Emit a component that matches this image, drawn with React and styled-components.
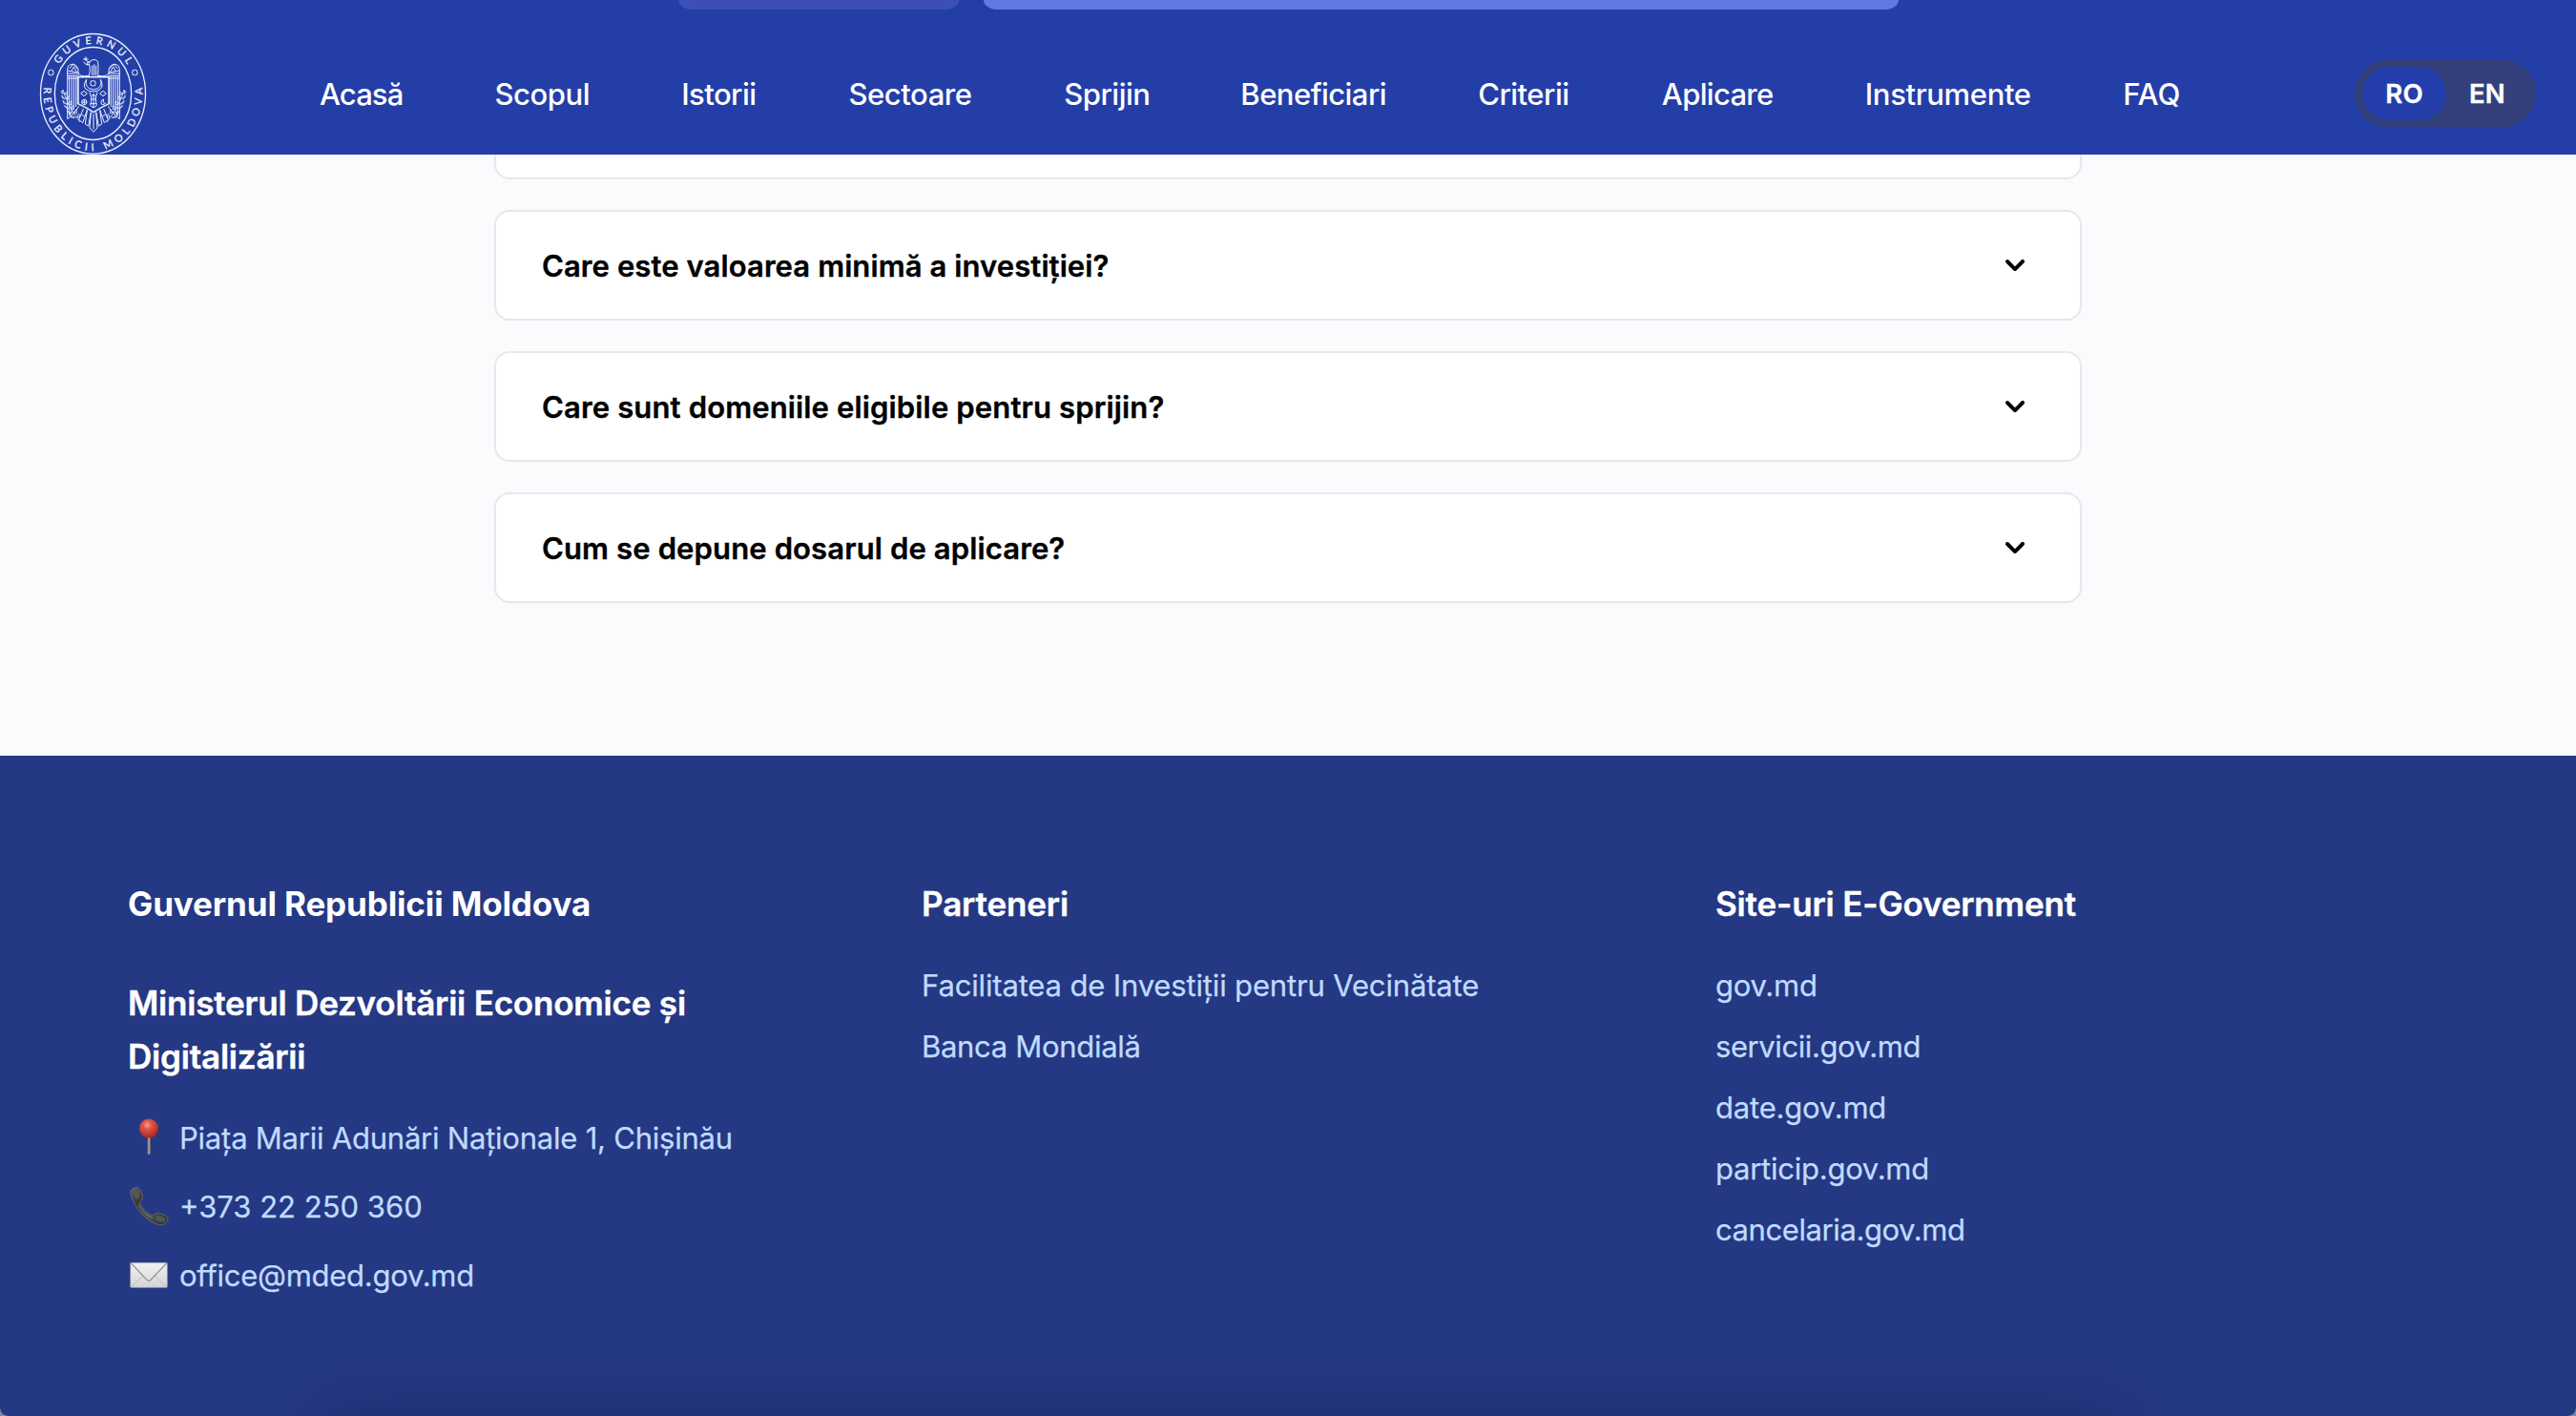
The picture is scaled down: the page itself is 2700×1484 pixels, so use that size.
import React from 'react';
import styled, { createGlobalStyle } from 'styled-components';

const GlobalStyle = createGlobalStyle`
  *, *::before, *::after { box-sizing: border-box; }
  html, body { margin: 0; padding: 0; background: #7f88a3; }
  body {
    font-family: Inter, Roboto, "Liberation Sans", sans-serif;
    -webkit-font-smoothing: antialiased;
  }
`;

const Page = styled.div`
  display: flex;
  flex-direction: column;
  width: 2700px;
  height: 1484px;
  overflow: hidden;
  background: #fafbfd;
  border-radius: 0 0 8px 8px;
`;

const Header = styled.header`
  flex: none;
  display: flex;
  flex-direction: column;
  height: 162px;
  background: #243ea8;
`;

const HeroEdge = styled.div`
  display: flex;
  gap: 26px;
  height: 10px;
  padding-left: 711px;
`;

const HeroButton = styled.div`
  width: ${(p) => p.$width}px;
  height: 10px;
  border-radius: 0 0 14px 14px / 0 0 10px 10px;
  background: ${(p) => (p.$primary ? '#607ae3' : '#3b50b7')};
`;

const Bar = styled.div`
  display: flex;
  align-items: center;
  height: 128px;
  margin-top: 24px;
  padding: 0 42px 0 38px;
`;

const LogoLink = styled.a`
  flex: none;
  display: flex;
  align-items: flex-end;
  width: 120px;
  height: 128px;
`;

const Nav = styled.nav`
  display: flex;
  gap: 96px;
  margin-left: 177px;
`;

const NavLink = styled.a`
  flex: none;
  width: ${(p) => p.$width}px;
  padding-top: 1px;
  color: #fff;
  font-size: 31px;
  font-weight: 500;
  line-height: 48px;
  letter-spacing: ${(p) => p.$track}px;
  white-space: nowrap;
`;

const LangSwitch = styled.div`
  display: flex;
  align-items: center;
  width: 190px;
  height: 72px;
  margin-left: auto;
  padding: 8px;
  border-radius: 36px;
  background: #33407b;
`;

const LangButton = styled.button`
  width: ${(p) => (p.$active ? 88 : 86)}px;
  height: 56px;
  padding: 0;
  border: 0;
  border-radius: 28px;
  background: ${(p) => (p.$active ? '#243eab' : 'transparent')};
  color: #fff;
  font-family: inherit;
  font-size: 27.5px;
  font-weight: 600;
  line-height: 56px;
  letter-spacing: 0.3px;
  -webkit-text-stroke: 0.4px #fff;
`;

const Faq = styled.main`
  flex: none;
  display: flex;
  flex-direction: column;
  gap: 32px;
  width: 1664px;
  height: 630px;
  margin: 0 auto;
`;

const ClosedTail = styled.div`
  height: 26px;
  border: 2px solid #e6e8eb;
  border-top: 0;
  border-radius: 0 0 16px 16px;
  background: #fff;
`;

const Question = styled.button`
  display: flex;
  align-items: center;
  justify-content: space-between;
  height: 116px;
  padding: 0 48px;
  border: 2px solid #e6e8eb;
  border-radius: 16px;
  background: #fff;
  color: #000;
  font-family: inherit;
  text-align: left;
`;

const QuestionText = styled.span`
  padding-top: 1px;
  font-size: 31px;
  font-weight: 600;
  line-height: 56px;
  letter-spacing: ${(p) => p.$track}px;
  -webkit-text-stroke: 0.35px #000;
`;

const Footer = styled.footer`
  position: relative;
  flex: 1;
  display: grid;
  grid-template-columns: repeat(3, 768px);
  column-gap: 64px;
  align-items: start;
  padding: 127px 134px 0;
  background: #253883;
`;

const DockShade = styled.div`
  position: absolute;
  left: 340px;
  right: 480px;
  bottom: -80px;
  height: 80px;
  box-shadow: 0 0 64px rgba(10, 16, 60, 0.32);
`;

const Column = styled.section`
  display: flex;
  flex-direction: column;
`;

const Heading = styled.h3`
  margin: 0 0 ${(p) => p.$after}px;
  color: #fff;
  font-size: 35px;
  font-weight: ${(p) => p.$weight};
  line-height: 56px;
  letter-spacing: ${(p) => p.$track}px;
  -webkit-text-stroke: ${(p) => (p.$weight < 700 ? 0.4 : 0)}px #fff;
`;

const Links = styled.ul`
  display: flex;
  flex-direction: column;
  gap: ${(p) => p.$gap}px;
  margin: 0;
  padding: 0;
  list-style: none;
`;

const LinkItem = styled.li`
  display: flex;
  align-items: flex-start;
  height: 48px;
  color: #bfdbfe;
  font-size: 31px;
  font-weight: 400;
  line-height: 49px;
  letter-spacing: ${(p) => p.$track}px;
  -webkit-text-stroke: 0.25px #bfdbfe;
  white-space: nowrap;
`;

const Glyph = styled.svg`
  flex: none;
  width: 54px;
  height: 48px;
`;

function Chevron() {
  return (
    <svg width="40" height="40" viewBox="0 0 20 20" fill="#000">
      <path
        fillRule="evenodd"
        clipRule="evenodd"
        d="M5.293 7.293a1 1 0 011.414 0L10 10.586l3.293-3.293a1 1 0 111.414 1.414l-4 4a1 1 0 01-1.414 0l-4-4a1 1 0 010-1.414z"
      />
    </svg>
  );
}

function Pin() {
  return (
    <Glyph viewBox="0 0 54 48">
      <defs>
        <radialGradient id="pinBall" cx="0.42" cy="0.32" r="0.7">
          <stop offset="0" stopColor="#f59a8c" />
          <stop offset="0.35" stopColor="#df5247" />
          <stop offset="1" stopColor="#a5241f" />
        </radialGradient>
        <linearGradient id="pinStem" x1="0" x2="1" y1="0" y2="0">
          <stop offset="0" stopColor="#5f6270" />
          <stop offset="0.5" stopColor="#a9a9ad" />
          <stop offset="1" stopColor="#6a6460" />
        </linearGradient>
      </defs>
      <path d="M20.4 23h3.4v17.5q-1.7 3-3.4 0z" fill="url(#pinStem)" />
      <circle cx="22" cy="14.6" r="10" fill="url(#pinBall)" />
    </Glyph>
  );
}

function Phone() {
  return (
    <Glyph viewBox="0 0 54 48">
      <defs>
        <linearGradient id="phoneBody" x1="0" x2="1" y1="0" y2="1">
          <stop offset="0" stopColor="#5a6260" />
          <stop offset="0.3" stopColor="#353a3b" />
          <stop offset="0.6" stopColor="#4b504f" />
          <stop offset="1" stopColor="#2b3030" />
        </linearGradient>
      </defs>
      <path
        d="M7.5 4.6C10.6 3.6 12.8 6.2 14.2 9.6C15.6 13 16.4 16.4 14.2 18.2C13 19.2 12.4 20 13.2 21.8C15.6 26.6 19.4 30.8 24.2 33.6C25.6 34.4 26.6 34 27.6 32.8C29.4 30.4 33 31.2 36.6 32.6C40.6 34.2 43 36.2 41.6 39.2C40 42.6 36.4 44.4 31.8 43.4C24.6 41.6 15.4 34.6 9.6 25.6C5.4 19.2 2.4 12.4 2.8 9C3.2 6.6 5.2 5.2 7.5 4.6Z"
        fill="url(#phoneBody)"
        stroke="#6f716c"
        strokeWidth="0.8"
      />
      <ellipse cx="8.8" cy="11.2" rx="3" ry="5.4" transform="rotate(-20 8.8 11.2)" fill="#525b59" />
      <ellipse cx="34" cy="37.6" rx="5.6" ry="3" transform="rotate(18 34 37.6)" fill="#4d5755" />
      <path d="M11 22C15 29.6 20.6 34.4 26 36.8" fill="none" stroke="#85898a" strokeWidth="0.8" />
    </Glyph>
  );
}

function Envelope() {
  return (
    <Glyph viewBox="0 0 54 48">
      <defs>
        <linearGradient id="envelopePaper" x1="0" x2="0" y1="0" y2="1">
          <stop offset="0" stopColor="#f1f1f1" />
          <stop offset="1" stopColor="#d3d5d8" />
        </linearGradient>
      </defs>
      <rect x="2.8" y="11.4" width="38.4" height="25.8" rx="0.8" fill="url(#envelopePaper)" stroke="#b4b6bb" strokeWidth="0.7" />
      <path d="M3.6 36.6L16.6 24.4M40.4 36.6L27.4 24.4" fill="none" stroke="#b3b5b8" strokeWidth="0.9" />
      <path d="M3.6 12L19.8 29.2Q22 31.4 24.2 29.2L40.4 12" fill="none" stroke="#98999c" strokeWidth="1.3" />
    </Glyph>
  );
}

const Star = ({ x, y, r }) => {
  const points = Array.from({ length: 16 }, (_, i) => {
    const radius = i % 2 ? r * 0.68 : r;
    const angle = (i * Math.PI) / 8;
    return `${(x + radius * Math.sin(angle)).toFixed(1)},${(y - radius * Math.cos(angle)).toFixed(1)}`;
  }).join(' ');
  return <polygon points={points} />;
};

const wing =
  'M98 284V132Q98 116 106 114Q116 108 125 116Q134 124 132 138L136 146Q150 152 166 148M98 132L132 138M98 148H134M98 141H133M104 126L116 112L130 126M110 134L118 120L126 134M104 148V272M111 148V262M118 148V254M125 148V246M132 152V238M98 284L112 272L126 256L134 244M104 272L111 262M98 156H132';

function Emblem() {
  return (
    <svg width="120" height="132" viewBox="0 0 360 396" overflow="visible" fill="none" stroke="#e9f0fd">
      <defs>
        <path id="arcTop" d="M45.5 205A133 157 0 0 1 311.5 205" />
        <path id="arcBottom" d="M26.9 167.8A155 179 0 1 0 330.1 167.8" />
      </defs>
      <ellipse cx="178.5" cy="205" rx="165" ry="188.5" strokeWidth="4" />
      <ellipse cx="178.5" cy="204" rx="120.5" ry="145.5" strokeWidth="4" />
      <g fill="#e9f0fd" strokeWidth="0.9" fontFamily="Lato, sans-serif" fontSize="32" textAnchor="middle">
        <text letterSpacing="13">
          <textPath href="#arcTop" startOffset="51.5%">GUVERNUL</textPath>
        </text>
        <text letterSpacing="13.4">
          <textPath href="#arcBottom" startOffset="51%">REPUBLICII MOLDOVA</textPath>
        </text>
      </g>
      <g strokeWidth="2.8">
        <Star x={46} y={138} r={10} />
        <Star x={310} y={138} r={10} />
        <Star x={178.5} y={172} r={10} />
      </g>
      <g strokeWidth="3" strokeLinejoin="round">
        <path d={wing} />
        <path d={wing} transform="translate(360 0) scale(-1 1)" />
        <path d="M166 150Q171 134 168 118Q162 110 170 102Q184 92 194 104Q196 120 194 150M176 116V148M182 112V148M188 116V148M170 104Q160 102 158 112L168 114M160 116L148 104M150 92L164 106M156 88V102M148 96H164" />
        <path d="M131 152H229V236Q206 246 180 263Q154 246 131 236Z" strokeWidth="4.6" />
        <path d="M158 160Q140 186 166 196Q180 200 192 196Q216 186 202 160Q208 178 194 188Q180 196 166 188Q152 178 158 160" />
        <path d="M168 200Q176 216 172 232Q166 244 180 248Q194 244 188 232Q184 216 192 200M180 204V246M174 210H186M174 222H186M170 236H190" />
        <path d="M140 204L150 196L160 204L150 212ZM200 204L210 196L220 204L210 212Z" />
        <circle cx="151" cy="231" r="8" />
        <path d="M143 231H159M151 223V239M212 222Q200 226 206 238Q214 242 218 234Q208 236 212 222Z" />
        <path d="M148 252L134 286L146 296L160 256M160 256L154 300L164 306L172 262M200 256L214 296L226 286L212 252M188 262L196 306L206 300L200 256M172 264L168 312L180 325L192 312L188 264M180 268V316M142 270L152 276M218 270L208 276" />
      </g>
      <g strokeWidth="2.4">
        {[false, true].map((flip) => (
          <g key={String(flip)} transform={flip ? 'translate(360 0) scale(-1 1)' : undefined}>
            <path d="M84 192Q96 240 138 294" />
            <path d="M84 206l-6-6l4-6zM88 204l10-6l-2 10zM90 222l-8-4l-2-8zM92 218l10-6v10zM96 238l-10-4l-2-8zM100 236l10-8v12zM104 252l-10-2l-6-8zM108 250l10-8v12zM112 266l-10 0l-6-8zM118 264l8-10l2 12zM122 280l-12 0l-4-8zM128 278l6-10l4 10z" />
          </g>
        ))}
      </g>
    </svg>
  );
}

const navItems = [
  { label: 'Acasă', width: 87.4, track: -0.9 },
  { label: 'Scopul', width: 99.8, track: -0.4 },
  { label: 'Istorii', width: 79.3, track: -0.55 },
  { label: 'Sectoare', width: 129.7, track: -0.44 },
  { label: 'Sprijin', width: 89.2, track: -0.48 },
  { label: 'Beneficiari', width: 152.8, track: -0.54 },
  { label: 'Criterii', width: 96.7, track: -0.5 },
  { label: 'Aplicare', width: 116.9, track: -0.68 },
  { label: 'Instrumente', width: 174.4, track: -0.35 },
  { label: 'FAQ', width: 60, track: 0 },
];

const questions = [
  { label: 'Care este valoarea minimă a investiției?', track: 0.1 },
  { label: 'Care sunt domeniile eligibile pentru sprijin?', track: 0.15 },
  { label: 'Cum se depune dosarul de aplicare?', track: 0.13 },
];

const contacts = [
  { icon: <Pin />, label: 'Piața Marii Adunări Naționale 1, Chișinău', track: -0.22 },
  { icon: <Phone />, label: '+373 22 250 360', track: 0 },
  { icon: <Envelope />, label: 'office@mded.gov.md', track: -0.27 },
];

const partners = [
  { label: 'Facilitatea de Investiții pentru Vecinătate', track: -0.15 },
  { label: 'Banca Mondială', track: -0.3 },
];

const sites = [
  { label: 'gov.md', track: -0.23 },
  { label: 'servicii.gov.md', track: -0.41 },
  { label: 'date.gov.md', track: -0.2 },
  { label: 'particip.gov.md', track: -0.25 },
  { label: 'cancelaria.gov.md', track: -0.41 },
];

const renderLinks = (items, gap) => (
  <Links $gap={gap}>
    {items.map(({ icon, label, track }) => (
      <LinkItem key={label} $track={track}>
        {icon}
        {label}
      </LinkItem>
    ))}
  </Links>
);

export default function App() {
  return (
    <>
      <GlobalStyle />
      <Page>
        <Header>
          <HeroEdge>
            <HeroButton $width={294} />
            <HeroButton $width={959} $primary />
          </HeroEdge>
          <Bar>
            <LogoLink>
              <Emblem />
            </LogoLink>
            <Nav>
              {navItems.map(({ label, width, track }) => (
                <NavLink key={label} $width={width} $track={track}>
                  {label}
                </NavLink>
              ))}
            </Nav>
            <LangSwitch>
              <LangButton $active>RO</LangButton>
              <LangButton>EN</LangButton>
            </LangSwitch>
          </Bar>
        </Header>
        <Faq>
          <ClosedTail />
          {questions.map(({ label, track }) => (
            <Question key={label}>
              <QuestionText $track={track}>{label}</QuestionText>
              <Chevron />
            </Question>
          ))}
        </Faq>
        <Footer>
          <Column>
            <Heading $weight={700} $track={-0.13} $after={48}>
              Guvernul Republicii Moldova
            </Heading>
            <Heading $weight={600} $track={-0.2} $after={33}>
              Ministerul Dezvoltării Economice și Digitalizării
            </Heading>
            {renderLinks(contacts, 24)}
          </Column>
          <Column>
            <Heading $weight={600} $track={-0.13} $after={33}>
              Parteneri
            </Heading>
            {renderLinks(partners, 16)}
          </Column>
          <Column>
            <Heading $weight={600} $track={-0.15} $after={33}>
              Site-uri E-Government
            </Heading>
            {renderLinks(sites, 16)}
          </Column>
          <DockShade />
        </Footer>
      </Page>
    </>
  );
}
